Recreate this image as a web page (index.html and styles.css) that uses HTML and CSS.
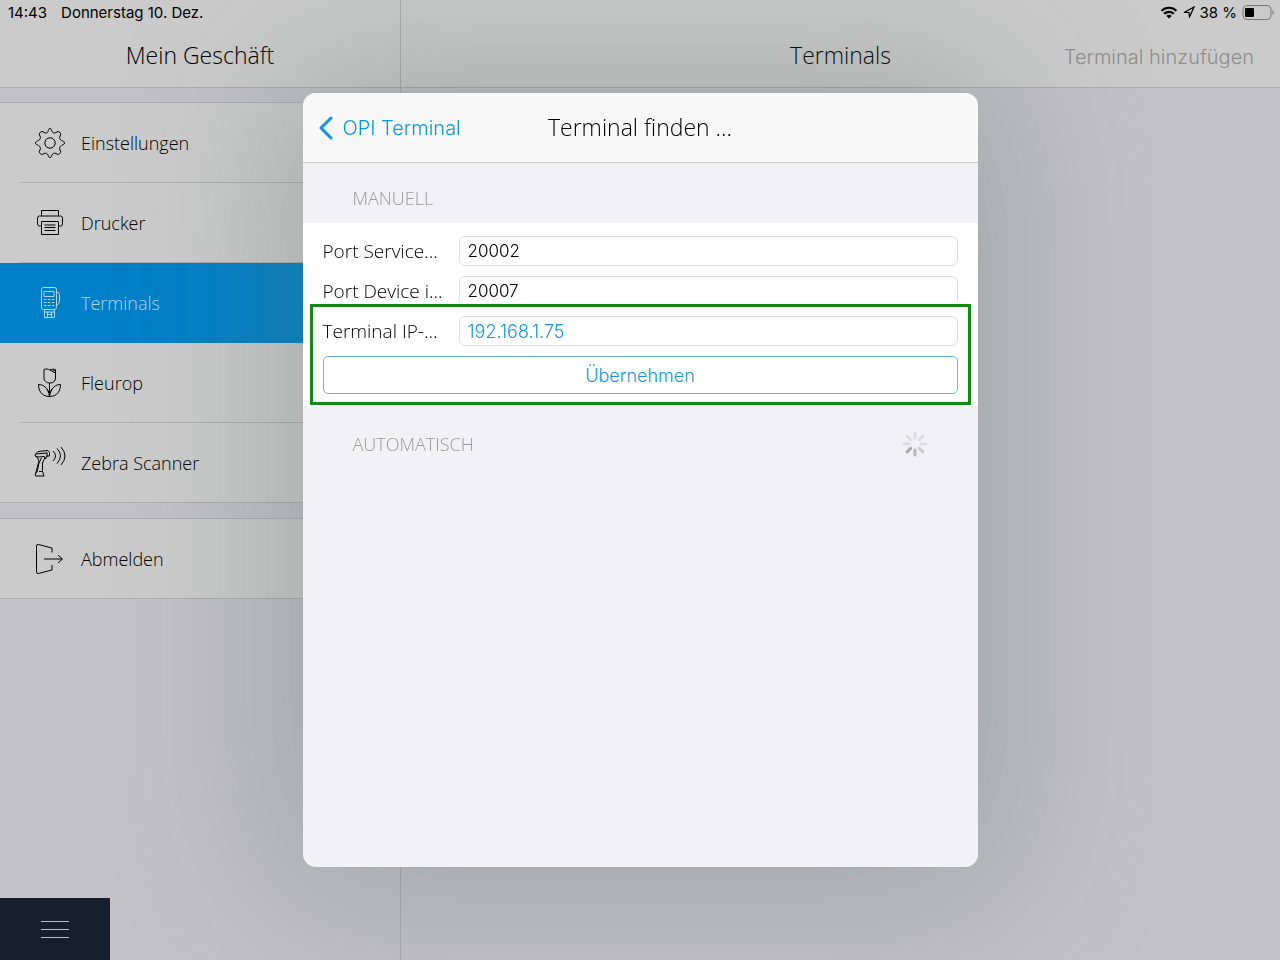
FILE: index.html
```html
<!DOCTYPE html>
<html lang="de">
<head>
  <meta charset="UTF-8" />
  <meta name="viewport" content="width=device-width, initial-scale=1.0" />
  <title>Terminals</title>
  <link rel="stylesheet" href="styles.css">
</head>
<body>
  <div class="app">
    <aside class="sidebar">
      <header class="bar">
        <div class="status">
          <span>14:43</span>
          <span>Donnerstag 10. Dez.</span>
        </div>
        <h1 class="title">Mein Geschäft</h1>
      </header>

      <nav class="menu">
        <div class="group">
          <a class="item" href="#">
            <svg class="icon" viewBox="0 0 32 32"><path d="M14 4.500C14.500 3 14.500 1.500 16 1.500S17.500 3 18 4.500C18.500 6 20.500 6.500 22 5.500C23.500 4.500 24.500 4 25.700 5.300S27 7.500 26 9C25 10.500 26 13 27.500 13.500C29 14 30.500 14.500 30.500 16S29 17.500 27.500 18.500C26 19 25 21.500 26 23C27 24.500 27 25.500 25.700 26.700S23.500 27.500 22 26.500C20.500 25.500 18.500 26.500 18 28C17.500 29 17.500 30.500 16 30.500S14.500 29 14 28C13.500 26.500 11.500 25.500 10 26.500C8.500 27.500 7.500 28 6.300 26.700S5 24.500 6 23C7 21.500 6 19 4.500 18.500C3 17.500 1.500 17.500 1.500 16S3 14 4.500 13.500C6 13 7 10.500 6 9C5 7.500 5 6.500 6.300 5.300S8.500 4.500 10 5.500C11.500 6.500 13.500 6 14 4.500Z"/><circle cx="16" cy="16" r="5.200"/></svg>
            Einstellungen
          </a>
          <a class="item" href="#">
            <svg class="icon" viewBox="0 0 32 32"><path d="M7.500 9V3.500h17V9M7.500 19H5.500a2 2 0 0 1-2-2v-6a2 2 0 0 1 2-2h21a2 2 0 0 1 2 2v6a2 2 0 0 1-2 2h-2M7.500 14.500h17v13h-17zM10.500 18h11M10.500 20.500h11M10.500 23.500h11"/></svg>
            Drucker
          </a>
          <a class="item active" href="#">
            <svg class="icon" viewBox="0 0 32 32"><rect x="7.500" y=".5" width="15" height="22" rx="2"/><path d="M10 4.500h10v5H10zM22.500 5.500h1.500q1.500 0 1.500 2v7q0 2-3 4M10.500 22.500v8h10v-8M10.500 25h10M13.500 25v5M17.500 25v5M10 12.500h2.500M14 12.500h2.500M18 12.500h2.500M10 15.500h2.500M14 15.500h2.500M18 15.500h2.500M10 18.500h2.500M14 18.500h2.500M18 18.500h2.500M14 27.500h3"/></svg>
            Terminals
          </a>
          <a class="item" href="#">
            <svg class="icon" viewBox="0 0 32 32"><path d="M10 2.500c2-1 4-.5 6 .5 2-1 4-1 5.500-.5v8.500c0 3-2 5-5.500 5S10 14 10 11zM16 3l5.500 3M18 4.500l3.500-1.500M15.500 16v13M15.500 29.500C14 20 9 17.500 4.500 17.500c0 6 3 12 11 12 8 0 11-6 11-12-4.500 0-9.500 2.500-11 12M13 22l2.500 4 2.500-4"/></svg>
            Fleurop
          </a>
          <a class="item" href="#">
            <svg class="icon" viewBox="0 0 32 32"><path d="M1.500 7L4 4.500l10-1 1.500 2V9H13l-1.500 3-1-2.500L4 10 1 9zM3 10l2 4-3.500 13M11 10.500L8.500 16v8l1.500 5H1.500L1 27l2-2 2-9 2.500-5M5 24.500h3.500M2 7l11-1M13 5.500v4M19 4q5 5 0 10M23 1.500q7 7 0 15M27 0q8 9 0 18"/></svg>
            Zebra Scanner
          </a>
        </div>
        <div class="group">
          <a class="item" href="#">
            <svg class="icon" viewBox="0 0 32 32"><path d="M18 9.500V5L4.500 1.500Q2.500 1 2.500 3v26q0 2 2 1.500L18 27v-5M10 16h18M24 12l4.500 4-4.500 4"/></svg>
            Abmelden
          </a>
        </div>
      </nav>

      <button class="menu-button" type="button" aria-label="Menü">
        <span></span><span></span><span></span>
      </button>
    </aside>

    <main class="content">
      <header class="bar">
        <div class="status status-right">
          <svg class="wifi" viewBox="0 0 18 13"><path d="M1.500 4.800a10.800 10.800 0 0 1 15 0M4.200 7.800a7 7 0 0 1 9.600 0"/><path class="solid" d="M9 12.500L6.300 9.900a4 4 0 0 1 5.400 0z"/></svg>
          <svg class="arrow" viewBox="0 0 12 12"><path d="M1 6.500L11 1 6.500 11 6 6.500z"/></svg>
          <span>38 %</span>
          <svg class="battery" viewBox="0 0 32 15"><rect x="1" y=".5" width="28" height="14" rx="4"/><path d="M31 5.500v4"/><rect class="level" x="3" y="3" width="9" height="9" rx="1"/></svg>
        </div>
        <div class="bar-row">
          <h1 class="title">Terminals</h1>
          <button class="add" type="button" disabled>Terminal hinzufügen</button>
        </div>
      </header>
    </main>
  </div>

  <div class="overlay">
    <section class="dialog" role="dialog" aria-labelledby="dialog-title">
      <header class="dialog-bar">
        <button class="back" type="button">
          <svg viewBox="0 0 14 24"><path d="M12 2L2 12l10 10"/></svg>
          OPI Terminal
        </button>
        <h2 class="title" id="dialog-title">Terminal finden ...</h2>
      </header>

      <h3 class="section-title">MANUELL</h3>
      <form class="form">
        <div class="field">
          <label for="port-service">Port Service...</label>
          <input type="text" id="port-service" value="20002" />
        </div>
        <div class="field">
          <label for="port-device">Port Device i...</label>
          <input type="text" id="port-device" value="20007" />
        </div>
        <div class="marked">
          <div class="field">
            <label for="ip">Terminal IP-...</label>
            <input class="link-color" type="text" id="ip" value="192.168.1.75" />
          </div>
          <button class="apply" type="button">Übernehmen</button>
        </div>
      </form>

      <div class="section-row">
        <h3 class="section-title">AUTOMATISCH</h3>
        <svg class="spinner" viewBox="0 0 26 26">
          <path d="M13 2v5M20.800 5.200l-3.500 3.500M24 13h-5M2 13h5M5.200 5.200l3.500 3.500"/>
          <path class="mid" d="M20.800 20.800l-3.500-3.500"/>
          <path class="dark" d="M13 24v-5"/>
          <path class="darker" d="M5.200 20.800l3.500-3.500"/>
        </svg>
      </div>
    </section>
  </div>
</body>
</html>
```
FILE: styles.css
```css
* { box-sizing: border-box; }
body { margin: 0; font-family: "Open Sans", sans-serif; background: #c2c1c6; color: #000; }
h1, h2, h3 { margin: 0; font-weight: normal; }
button { font-family: Inter, sans-serif; font-weight: 350; cursor: pointer; }
svg { fill: none; stroke: currentColor; flex: none; }

.app { display: flex; min-height: 100vh; }
.sidebar { display: flex; flex-direction: column; width: 401px; border-right: 1px solid #aaaaad; }
.content { flex: 1; }

/* top bars */
.bar { height: 88px; background: #cbcbcb; border-bottom: 1px solid #a9a9ab; }
.status { display: flex; align-items: center; gap: 14px; height: 24px; padding: 0 8px; font: 15px Inter, sans-serif; }
.status-right { justify-content: flex-end; gap: 5px; padding-right: 6px; }
.title { padding-bottom: 2px; font-size: 23px; line-height: 30px; font-weight: 340; text-align: center; }
.bar .title { margin-top: 16px; }
.bar-row { display: grid; grid-template-columns: 1fr auto 1fr; align-items: center; padding: 0 26px; }
.bar-row .title { grid-column: 2; }
.add { justify-self: end; margin-top: 18px; padding: 0; border: 0; background: none; color: #8e8e8e; font-size: 20px; cursor: default; }
.wifi { width: 18px; height: 13px; stroke-width: 2.2; }
.arrow { width: 12px; height: 12px; stroke-width: 1.2; }
.battery { width: 32px; height: 15px; color: #777; }
.wifi .solid, .battery .level { fill: #000; stroke: none; }

/* side menu */
.menu { display: flex; flex-direction: column; gap: 15px; padding-top: 14px; }
.group { background: #cbcbcb; border-top: 1px solid #adadb0; }
.item { display: flex; align-items: center; gap: 15px; height: 80px; padding-left: 34px; font-size: 18px; font-weight: 340; color: #000; text-decoration: none;
  background: linear-gradient(#adadb0, #adadb0) 20px 100% / 100% 1px no-repeat; }
.item:last-child { background-position: 0 100%; }
.item.active { background: #0080c8; color: #b5d5e8; }
.icon { width: 32px; height: 32px; stroke-width: 1; stroke-linejoin: round; }
.menu-button { display: flex; flex-direction: column; align-items: center; justify-content: center; gap: 7px; width: 110px; height: 62px; margin-top: auto; padding: 0; border: 0; background: #15202b; }
.menu-button span { width: 28px; height: 1px; background: #b5bcc0; }

/* dialog */
.overlay { position: fixed; inset: 0; display: flex; align-items: center; justify-content: center; }
.dialog { width: 675px; height: 774px; max-width: 100%; max-height: 100%; overflow: hidden; border-radius: 13px; background: #f2f1f6; box-shadow: 0 0 160px 20px rgba(89, 106, 97, 0.35); }
.dialog-bar { display: grid; grid-template-columns: 1fr auto 1fr; align-items: center; height: 70px; padding: 0 16px; background: #f8f8f8; border-bottom: 1px solid #c8c8ca; }
.back { display: flex; align-items: center; gap: 10px; padding: 0; border: 0; background: none; color: #0c96dc; font-size: 20px; }
.back svg { width: 14px; height: 24px; stroke-width: 3; stroke-linecap: round; stroke-linejoin: round; }
.section-title { padding: 23px 50px 13px; font-size: 18px; line-height: 24px; font-weight: 300; color: #999; }
.form { display: flex; flex-direction: column; gap: 10px; padding: 13px 20px 12px; background: #fff; }
.field { display: flex; align-items: center; }
.field label { width: 136px; font-size: 19px; line-height: 30px; font-weight: 340; white-space: nowrap; }
.field input { flex: 1; min-width: 0; height: 30px; padding: 0 8px; border: 1px solid #ddd; border-radius: 6px; background: #fff; font: 350 17px Inter, sans-serif; color: #000; }
.field .link-color { font-size: 18px; color: #1795d8; }
.marked { position: relative; display: flex; flex-direction: column; gap: 10px; }
.marked::after { content: ""; position: absolute; inset: -12px -13px -11px; border: 3px solid #138a13; pointer-events: none; }
.apply { height: 38px; border: 1px solid #6bbbdc; border-radius: 5px; background: #fff; color: #1795d8; font-size: 18px; }
.section-row { display: flex; align-items: center; justify-content: space-between; padding: 8px 50px 0; }
.section-row .section-title { padding: 18px 0; }
.spinner { width: 26px; height: 26px; stroke: #dcdce0; stroke-width: 3; stroke-linecap: round; }
.spinner .mid { stroke: #c8c8cc; }
.spinner .dark { stroke: #b8b8bc; }
.spinner .darker { stroke: #a6a6aa; }
```
